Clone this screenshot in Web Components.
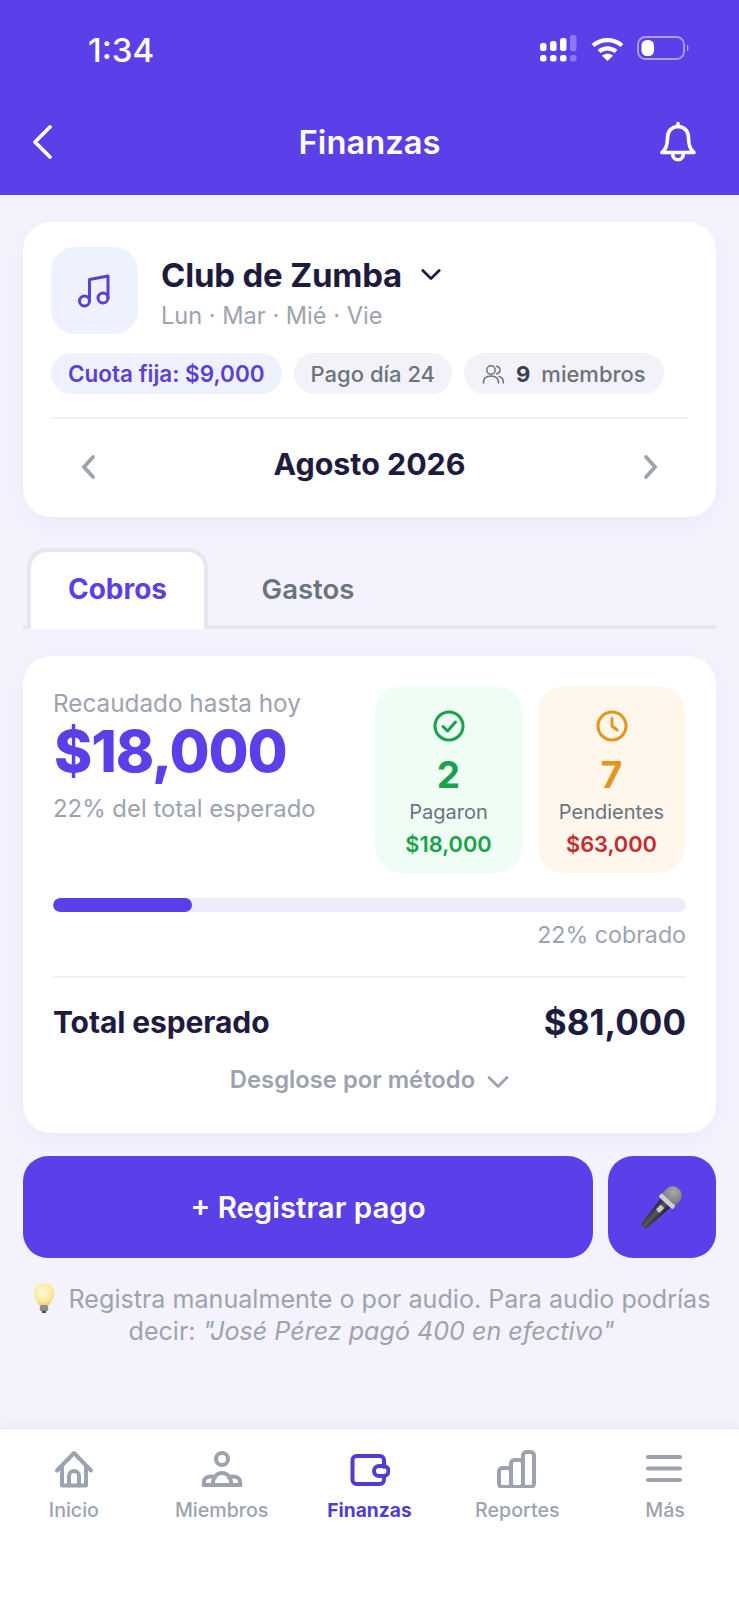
<!DOCTYPE html>
<html lang="es">
<head>
<meta charset="utf-8">
<title>Finanzas</title>
<style>
    html, body { margin: 0; padding: 0; }
    body { background: #F4F3FD; font-family: Inter, "Liberation Sans", sans-serif; color: #1E1B3F; }
    .page { display: flex; flex-direction: column; min-height: 1600px; }
    .content { flex: 1; display: block; padding: 0 23px; }
</style>
</head>
<body>
<div class="page">
    <app-header title-text="Finanzas" time="1:34"></app-header>
    <div class="content">
        <club-card></club-card>
        <tab-bar></tab-bar>
        <summary-card></summary-card>
        <action-row></action-row>
        <hint-note></hint-note>
    </div>
    <bottom-nav>
        <nav-item icon="home">Inicio</nav-item>
        <nav-item icon="people">Miembros</nav-item>
        <nav-item icon="wallet" active>Finanzas</nav-item>
        <nav-item icon="bars">Reportes</nav-item>
        <nav-item icon="menu">Más</nav-item>
    </bottom-nav>
</div>

<script>
class BaseElement extends HTMLElement {
    constructor() {
        super();
        this.attachShadow({mode: 'open'});
    }
    getTemplate() {
        const template = document.createElement("template");
        template.innerHTML = `${this.getMarkup()}<style>${this.getStyles()}</style>`;
        return template;
    }
    connectedCallback() {
        this.shadowRoot.appendChild(this.getTemplate().content.cloneNode(true));
    }
}

class AppHeader extends BaseElement {
    getMarkup() {
        return `
            <div class="status">
                <span class="time">${this.getAttribute('time')}</span>
                <svg class="cluster" width="150" height="30" viewBox="0 0 150 30">
                    <g fill="#fff">
                        <rect x="0" y="9" width="6.5" height="8" rx="2.5"/>
                        <rect x="10" y="7" width="6.5" height="10" rx="2.5"/>
                        <rect x="20" y="4" width="6.5" height="13" rx="2.5"/>
                        <rect x="30" y="1" width="6.5" height="16" rx="2.5" opacity=".3"/>
                        <rect x="0" y="21" width="6.5" height="6.5" rx="2.5"/>
                        <rect x="10" y="21" width="6.5" height="6.5" rx="2.5"/>
                        <rect x="20" y="21" width="6.5" height="6.5" rx="2.5"/>
                        <rect x="30" y="21" width="6.5" height="6.5" rx="2.5" opacity=".3"/>
                    </g>
                    <g fill="none" stroke="#fff" stroke-width="4.2">
                        <path d="M53 11.5c8.500-7.300 20.500-7.300 29 0"/>
                        <path d="M59 17.500c5-4.300 12-4.300 17 0"/>
                    </g>
                    <path d="M67.500 27l-5.500-5.300c3.200-2.500 7.800-2.500 11 0z" fill="#fff"/>
                    <rect x="98" y="3" width="46" height="22" rx="7.500" fill="none" stroke="#fff" stroke-opacity=".5" stroke-width="1.800"/>
                    <rect x="101.500" y="6" width="12.500" height="16" rx="5.500" fill="#fff"/>
                    <path d="M147 10.500c2 1 2 6 0 7z" fill="#fff" fill-opacity=".5"/>
                </svg>
            </div>
            <div class="bar">
                <svg class="back" width="24" height="36" viewBox="0 0 24 36" fill="none" stroke="#fff" stroke-width="3.800" stroke-linecap="round" stroke-linejoin="round"><path d="M19 3L4 18l15 15"/></svg>
                <h1>${this.getAttribute('title-text')}</h1>
                <svg class="bell" width="38" height="42" viewBox="0 0 38 42" fill="none" stroke="#fff" stroke-width="3.600" stroke-linecap="round" stroke-linejoin="round">
                    <path d="M18 5.500c-6.500 0-10.500 5-10.500 11.500 0 8-2 11-5.500 14.500h32C30.500 28 28.500 25 28.500 17c0-6.500-4-11.500-10.500-11.500z"/>
                    <path d="M18 2.500v3"/>
                    <path d="M12.500 32c0 9 11 9 11 0"/>
                </svg>
            </div>
        `;
    }
    getStyles() {
        return `
            :host { display: block; background: #5B3FE8; color: #fff; height: 195px; box-sizing: border-box; }
            .status { height: 100px; box-sizing: border-box; display: flex; align-items: center; justify-content: space-between; padding: 0 49px 0 88px; }
            .time { font-size: 33px; font-weight: 500; line-height: 36px; }
            .cluster { display: block; margin-top: -2px; }
            .bar { height: 84px; display: grid; grid-template-columns: 1fr auto 1fr; align-items: center; padding: 0 41px; }
            .back { margin-left: -10px; }
            .bell { justify-self: end; }
            h1 { margin: 0; font-size: 32.700px; font-weight: 600; line-height: 40px; }
        `;
    }
}

class ClubCard extends BaseElement {
    getMarkup() {
        return `
            <div class="top">
                <div class="tile">
                    <svg width="36" height="36" viewBox="0 0 36 36" fill="none" stroke="#5B3FD9" stroke-width="3" stroke-linecap="round" stroke-linejoin="round">
                        <circle cx="7.500" cy="28" r="5"/>
                        <circle cx="26" cy="25" r="5"/>
                        <path d="M12.500 28V6.500L31 3v22"/>
                    </svg>
                </div>
                <div class="name">
                    <div class="title">Club de Zumba
                        <svg width="20" height="14" viewBox="0 0 22 14" fill="none" stroke="#1E1B3F" stroke-width="3" stroke-linecap="round" stroke-linejoin="round"><path d="M2 2l9 9 9-9"/></svg>
                    </div>
                    <div class="days">Lun · Mar · Mié · Vie</div>
                </div>
            </div>
            <div class="pills">
                <span class="pill fee">Cuota fija: $9,000</span>
                <span class="pill">Pago día 24</span>
                <span class="pill wide">
                    <svg width="23" height="20" viewBox="0 0 23 20" fill="none" stroke="#6B7280" stroke-width="1.500" stroke-linecap="round" stroke-linejoin="round">
                        <circle cx="9" cy="6" r="4.200"/>
                        <path d="M1.500 19c0-4.500 3-7 7.500-7s7.500 2.500 7.500 7"/>
                        <path d="M14.500 2.200c2.300.5 3.500 2 3.500 3.800s-1.200 3.300-3.500 3.800"/>
                        <path d="M17 12.500c2.800.8 4.500 3 4.500 6.500"/>
                    </svg>
                    <b>9</b><span class="gap">miembros</span>
                </span>
            </div>
            <div class="month">
                <svg width="17" height="26" viewBox="0 0 17 26" fill="none" stroke="#9CA3AF" stroke-width="3.800" stroke-linecap="round" stroke-linejoin="miter"><path d="M13 3L4 13l9 10"/></svg>
                <span>Agosto 2026</span>
                <svg width="17" height="26" viewBox="0 0 17 26" fill="none" stroke="#9CA3AF" stroke-width="3.800" stroke-linecap="round" stroke-linejoin="miter"><path d="M4 3l9 10-9 10"/></svg>
            </div>
        `;
    }
    getStyles() {
        return `
            :host { display: block; margin-top: 27px; height: 295px; box-sizing: border-box; padding: 25px 28px 0; background: #fff; border-radius: 28px; box-shadow: 0 6px 26px rgba(91,63,232,.06); }
            .top { display: flex; gap: 23px; }
            .tile { width: 87px; height: 87px; flex: none; border-radius: 24px; background: #EEF2FE; display: flex; align-items: center; justify-content: center; }
            .name { padding-top: 8px; }
            .title { font-size: 33px; line-height: 40px; font-weight: 700; color: #1E1B3F; display: flex; align-items: center; gap: 19px; letter-spacing: -.2px; }
            .days { margin-top: 4px; font-size: 23.600px; line-height: 34px; color: #9CA3AF; }
            .pills { display: flex; gap: 12px; margin-top: 19px; }
            .pill { height: 41px; padding: 0 17px; border-radius: 21px; background: #F3F2F8; color: #6B7280; font-size: 22px; font-weight: 500; display: inline-flex; align-items: center; white-space: nowrap; }
            .pill svg { margin-right: 11px; }
            .pill b { color: #374151; font-weight: 700; }
            .wide { padding: 0 18px; }
            .gap { margin-left: 11px; }
            .fee { background: #EEF2FE; color: #5B3FD9; font-size: 22.500px; font-weight: 600; }
            .month { margin-top: 23px; border-top: 2px solid #F1F0F8; height: 78px; display: flex; align-items: center; justify-content: space-between; padding: 14px 29px 0; box-sizing: border-box; }
            .month svg { margin-top: 5px; }
            .month span { font-size: 30.400px; font-weight: 700; color: #1E1B3F; }
        `;
    }
}

class TabBar extends BaseElement {
    getMarkup() {
        return `
            <div class="tab active">Cobros</div>
            <div class="tab">Gastos</div>
        `;
    }
    getStyles() {
        return `
            :host { display: flex; margin-top: 31px; height: 81px; box-sizing: border-box; border-bottom: 4px solid #E6E6EE; padding-left: 4px; }
            .tab { width: 181px; height: 81px; box-sizing: border-box; padding-top: 19px; text-align: center; font-size: 27.500px; line-height: 36px; font-weight: 600; color: #6B7280; border-radius: 20px 20px 0 0; border: 4px solid transparent; border-bottom: 0; }
            .active { background: #fff; border-color: #E6E6EE; color: #5B3FE8; font-weight: 700; font-size: 28px; }
            .tab:not(.active) { width: 200px; margin-left: 0; }
        `;
    }
}

class StatTile extends BaseElement {
    getMarkup() {
        return `
            <slot name="icon"></slot>
            <div class="num"><slot name="num"></slot></div>
            <div class="label"><slot name="label"></slot></div>
            <div class="amount"><slot name="amount"></slot></div>
        `;
    }
    getStyles() {
        const tone = this.getAttribute('tone') === 'green'
            ? {bg: '#F0FDF4', num: '#16A34A', amount: '#16A34A'}
            : {bg: '#FFF6EC', num: '#E6951C', amount: '#C62B2B'};
        return `
            :host { display: flex; flex-direction: column; align-items: center; width: 147px; height: 187px; box-sizing: border-box; padding-top: 23px; border-radius: 26px; background: ${tone.bg}; }
            ::slotted(svg) { display: block; }
            .num { margin-top: 12px; font-size: 37px; line-height: 40px; font-weight: 700; color: ${tone.num}; }
            .label { margin-top: 4px; font-size: 20px; line-height: 26px; color: #6B7280; }
            .amount { margin-top: 6px; font-size: 21.800px; line-height: 26px; font-weight: 600; color: ${tone.amount}; }
        `;
    }
}

class SummaryCard extends BaseElement {
    getMarkup() {
        return `
            <div class="top">
                <div class="left">
                    <div class="muted label">Recaudado hasta hoy</div>
                    <div class="big">$18,000</div>
                    <div class="muted sub">22% del total esperado</div>
                </div>
                <div class="stats">
                    <stat-tile tone="green">
                        <svg slot="icon" width="34" height="34" viewBox="0 0 34 34" fill="none" stroke="#16A34A" stroke-width="3" stroke-linecap="round" stroke-linejoin="round"><circle cx="17" cy="17" r="14"/><path d="M11 17.500l4.500 4.500 8-9"/></svg>
                        <span slot="num">2</span><span slot="label">Pagaron</span><span slot="amount">$18,000</span>
                    </stat-tile>
                    <stat-tile tone="orange">
                        <svg slot="icon" width="34" height="34" viewBox="0 0 34 34" fill="none" stroke="#E6951C" stroke-width="3" stroke-linecap="round" stroke-linejoin="round"><circle cx="17" cy="17" r="14"/><path d="M17 9.500V17l5 4"/></svg>
                        <span slot="num">7</span><span slot="label">Pendientes</span><span slot="amount">$63,000</span>
                    </stat-tile>
                </div>
            </div>
            <div class="track"><div class="fill"></div></div>
            <div class="muted pct">22% cobrado</div>
            <div class="total">
                <span class="tlabel">Total esperado</span>
                <span class="tvalue">$81,000</span>
            </div>
            <div class="more">Desglose por método
                <svg width="22" height="15" viewBox="0 0 22 15" fill="none" stroke="#9CA3AF" stroke-width="2.800" stroke-linecap="round" stroke-linejoin="round"><path d="M2 2.500l9 9 9-9"/></svg>
            </div>
        `;
    }
    getStyles() {
        return `
            :host { display: block; margin-top: 27px; height: 477px; box-sizing: border-box; padding: 30px 30px 0; background: #fff; border-radius: 28px; box-shadow: 0 6px 26px rgba(91,63,232,.06); }
            .top { display: flex; justify-content: space-between; }
            .muted { font-size: 23.900px; line-height: 34px; color: #9CA3AF; }
            .label { font-size: 24.300px; }
            .big { font-size: 58px; line-height: 66px; font-weight: 800; color: #5B3FE8; margin-top: -2px; margin-left: 1px; letter-spacing: -1.100px; }
            .sub { margin-top: 8px; }
            .stats { display: flex; gap: 16px; margin-right: 1px; }
            .track { margin-top: 25px; height: 14px; border-radius: 7px; background: #EEECFA; overflow: hidden; }
            .fill { width: 22%; height: 100%; border-radius: 7px; background: #5B3FE8; }
            .pct { margin-top: 8px; text-align: right; font-size: 23.200px; line-height: 30px; }
            .total { margin-top: 26px; border-top: 2px solid #F1F0F8; height: 88px; display: flex; justify-content: space-between; align-items: center; box-sizing: border-box; padding-top: 2px; }
            .tlabel { font-size: 30px; font-weight: 700; color: #1E1B3F; letter-spacing: -.1px; }
            .tvalue { font-size: 35px; font-weight: 700; color: #1E1B3F; }
            .more { margin-top: 1px; display: flex; justify-content: center; align-items: center; gap: 12px; font-size: 23.800px; line-height: 30px; font-weight: 600; color: #9CA3AF; }
            .more svg { margin-top: 4px; }
        `;
    }
}

class ActionRow extends BaseElement {
    getMarkup() {
        return `
            <div class="btn main">+ Registrar pago</div>
            <div class="btn mic">
                <svg width="46" height="46" viewBox="0 0 46 46">
                    <defs>
                        <linearGradient id="handle" x1="0" y1="0" x2="1" y2="0">
                            <stop offset="0" stop-color="#232325"/>
                            <stop offset=".5" stop-color="#5a5a5d"/>
                            <stop offset="1" stop-color="#1b1b1d"/>
                        </linearGradient>
                        <radialGradient id="head" cx=".4" cy=".35" r=".8">
                            <stop offset="0" stop-color="#a8a8ab"/>
                            <stop offset="1" stop-color="#747478"/>
                        </radialGradient>
                    </defs>
                    <g transform="rotate(43 33 12)">
                        <path d="M26.500 22h13l-3 31c-.2 2-6.800 2-7 0z" fill="url(#handle)"/>
                        <rect x="30.500" y="26" width="5" height="7" rx="1" fill="#c8c8ca"/>
                        <path d="M24 11a9 9 0 0 1 18 0v8H24z" fill="url(#head)"/>
                        <rect x="23.500" y="17" width="19" height="4.500" rx="1" fill="#cfcfd1"/>
                    </g>
                </svg>
            </div>
        `;
    }
    getStyles() {
        return `
            :host { display: flex; gap: 15px; margin-top: 23px; height: 102px; }
            .btn { background: #5B3FE8; border-radius: 25px; color: #fff; display: flex; align-items: center; justify-content: center; }
            .main { flex: 1; font-size: 29.400px; font-weight: 600; padding-top: 1px; box-sizing: border-box; }
            .mic { width: 108px; flex: none; }
        `;
    }
}

class HintNote extends BaseElement {
    getMarkup() {
        return `
            <svg width="22" height="31" viewBox="0 0 24 31" preserveAspectRatio="none">
                <defs><radialGradient id="glow" cx=".45" cy=".4" r=".65"><stop offset="0" stop-color="#FFFBE0"/><stop offset=".7" stop-color="#FCE89C"/><stop offset="1" stop-color="#F1C95A"/></radialGradient></defs>
                <path d="M12 1C5.500 1 1 5.700 1 11.300c0 5 3.600 7.400 5 11.700h12c1.400-4.300 5-6.700 5-11.700C23 5.700 18.500 1 12 1z" fill="url(#glow)"/>
                <rect x="7.500" y="23" width="9" height="6" rx="1.500" fill="#8d8d92"/>
                <rect x="9.500" y="28.500" width="5" height="2.500" rx="1" fill="#55555a"/>
            </svg>
            Registra manualmente o por audio. Para audio podrías<br>decir: <i>"José Pérez pagó 400 en efectivo"</i>
        `;
    }
    getStyles() {
        return `
            :host { display: block; margin-top: 24px; text-align: center; font-size: 25.100px; line-height: 32px; color: #9CA3AF; margin-left: -10px; margin-right: -14px; white-space: nowrap; }
            svg { vertical-align: -5px; margin-right: 7px; }
        `;
    }
}

class BottomNav extends BaseElement {
    getMarkup() {
        return `<slot></slot>`;
    }
    getStyles() {
        return `
            :host { display: flex; height: 172px; box-sizing: border-box; background: #fff; border-top: 1px solid #E8E8EE; box-shadow: 0 -3px 10px rgba(30,27,63,.04); }
        `;
    }
}

const NAV_ICONS = {
    home: `<path d="M4 20.500L21 3l17 17.500"/><path d="M9 16v19.500h24V16"/><path d="M16 35.500V26a5 5 0 0 1 10 0v9.500"/>`,
    people: `<circle cx="21" cy="9" r="6"/><path d="M3 35v-3c0-3.500 3-5.500 7-5.500 1.500 0 2.800.3 4 1"/><path d="M39 35v-3c0-3.500-3-5.500-7-5.500-1.500 0-2.800.3-4 1"/><path d="M12 35v-2c0-6 4-10 9-10s9 4 9 10v2"/><path d="M2.500 35h37"/>`,
    wallet: `<path d="M36 17V10a4 4 0 0 0-4-4H8.500a4 4 0 0 0-4 4v20a4 4 0 0 0 4 4H32a4 4 0 0 0 4-4v-4"/><rect x="26" y="16" width="14.500" height="10" rx="5"/>`,
    bars: `<rect x="3" y="18" width="12" height="19" rx="3.500"/><rect x="15" y="10" width="12" height="27" rx="3.500"/><rect x="27" y="2" width="11" height="35" rx="3.500"/>`,
    menu: `<path d="M4 7h32M4 18.500h32M4 30h32"/>`
};

class NavItem extends BaseElement {
    getMarkup() {
        const icon = this.getAttribute('icon');
        return `
            <svg width="42" height="38" viewBox="0 0 42 38" fill="none" stroke="currentColor" stroke-width="4" stroke-linecap="round" stroke-linejoin="round">${NAV_ICONS[icon]}</svg>
            <span><slot></slot></span>
        `;
    }
    getStyles() {
        const active = this.hasAttribute('active');
        return `
            :host { flex: 1; display: flex; flex-direction: column; align-items: center; padding-top: 21px; color: ${active ? '#4F3FD0' : '#9CA3AF'}; }
            svg { display: block; color: ${active ? '#4F3FD0' : '#9CA3AF'}; }
            span { margin-top: 10px; font-size: ${active ? 19.2 : 19.6}px; line-height: 24px; font-weight: ${active ? 700 : 500}; }
        `;
    }
}

customElements.define('app-header', AppHeader);
customElements.define('club-card', ClubCard);
customElements.define('tab-bar', TabBar);
customElements.define('stat-tile', StatTile);
customElements.define('summary-card', SummaryCard);
customElements.define('action-row', ActionRow);
customElements.define('hint-note', HintNote);
customElements.define('bottom-nav', BottomNav);
customElements.define('nav-item', NavItem);
</script>
</body>
</html>
